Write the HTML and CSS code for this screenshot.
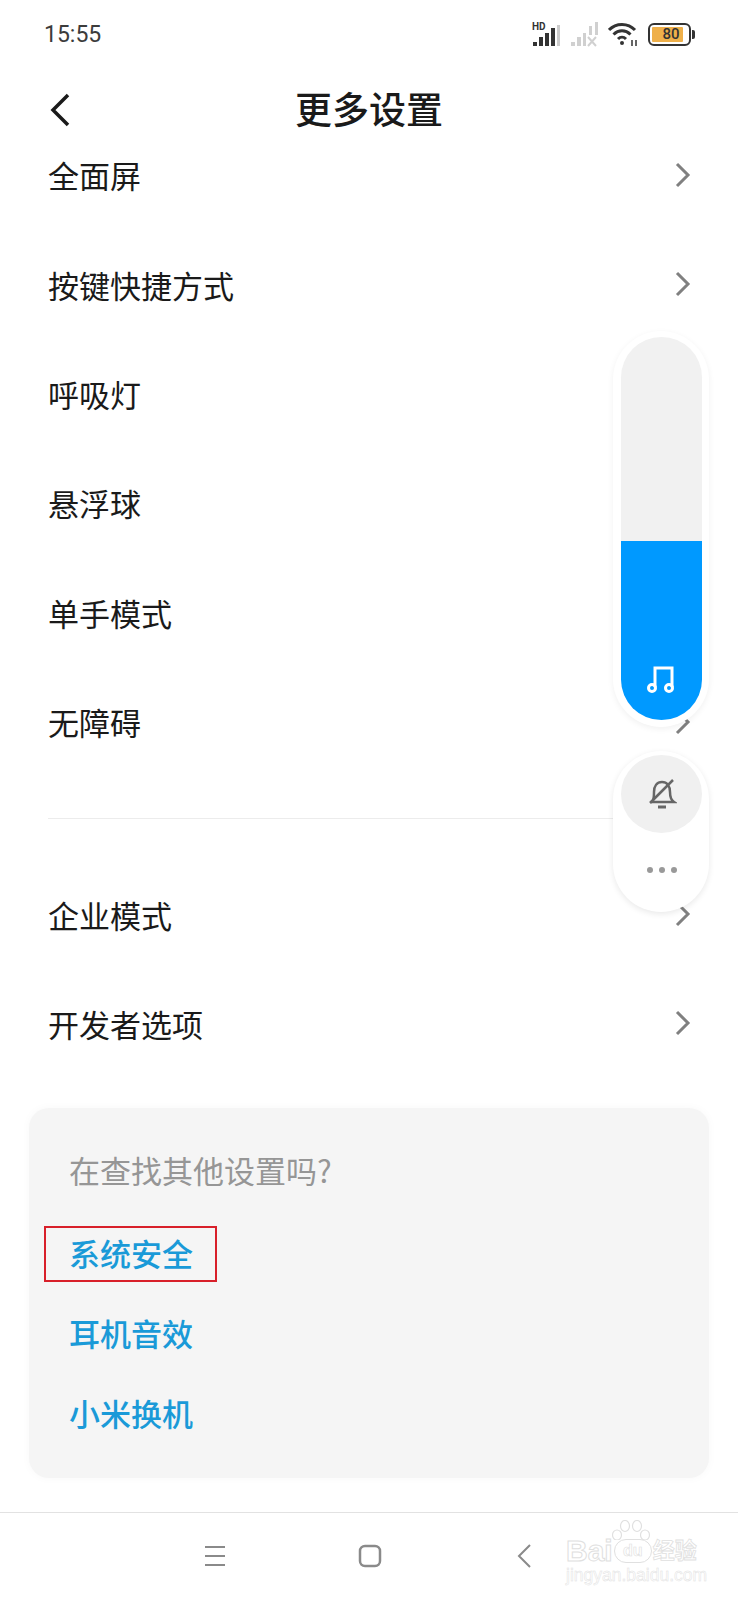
FILE: index.html
```html
<!DOCTYPE html>
<html lang="zh-CN">
  <head>
    <meta charset="UTF-8" />
    <meta name="viewport" content="width=device-width, initial-scale=1.0" />
    <title>更多设置</title>
    <link rel="stylesheet" href="styles.css">
  </head>
  <body>
    <div class="phone">
      <!-- 状态栏 -->
      <div class="status-bar">
        <span class="time">15:55</span>
        <div class="status-icons">
          <svg class="signal" width="28" height="25" viewBox="0 0 28 25">
            <text x="0" y="8" class="hd">HD</text>
            <rect x="1" y="20" width="4" height="4" fill="#333" />
            <rect x="7" y="15" width="4" height="9" fill="#333" />
            <rect x="13" y="11" width="4" height="13" fill="#333" />
            <rect x="19" y="6" width="4" height="18" fill="#333" />
            <rect x="25" y="3" width="3" height="21" fill="#ccc" />
          </svg>
          <svg class="signal" width="28" height="25" viewBox="0 0 28 25">
            <rect x="1" y="20" width="4" height="4" fill="#d0d0d0" />
            <rect x="7" y="15" width="4" height="9" fill="#d0d0d0" />
            <rect x="13" y="11" width="3" height="13" fill="#d0d0d0" />
            <rect x="19" y="4" width="3" height="9" fill="#d0d0d0" />
            <rect x="25" y="0" width="3" height="13" fill="#d0d0d0" />
            <path d="M18 15l8 9M26 15l-8 9" stroke="#d0d0d0" stroke-width="2" fill="none" />
          </svg>
          <svg class="wifi" width="30" height="25" viewBox="0 0 30 25" fill="none" stroke="#333" stroke-width="3">
            <path d="M1 8c7-7.500 19-7.500 26 0" />
            <path d="M5.500 12.500c5-5 12-5 17 0" />
            <path d="M10 17c2.500-2.500 5.500-2.500 8 0" />
            <circle cx="14" cy="21" r="2" fill="#333" stroke="none" />
            <path d="M24 18v6M28 18v6" stroke-width="1.500" />
          </svg>
          <div class="battery">
            <div class="battery-body"><span class="battery-level">80</span></div>
            <div class="battery-tip"></div>
          </div>
        </div>
      </div>

      <!-- 标题栏 -->
      <div class="header">
        <svg class="back" width="24" height="34" viewBox="0 0 24 34" fill="none" stroke="#1a1a1a" stroke-width="3.500">
          <path d="M20 2L5 17l15 15" />
        </svg>
        <h1>更多设置</h1>
      </div>

      <!-- 设置列表 -->
      <div class="list">
        <div class="row"><span>全面屏</span><svg class="chevron" viewBox="0 0 16 26"><path d="M2 2l11 11L2 24" /></svg></div>
        <div class="row"><span>按键快捷方式</span><svg class="chevron" viewBox="0 0 16 26"><path d="M2 2l11 11L2 24" /></svg></div>
        <div class="row"><span>呼吸灯</span><svg class="chevron" viewBox="0 0 16 26"><path d="M2 2l11 11L2 24" /></svg></div>
        <div class="row"><span>悬浮球</span><svg class="chevron" viewBox="0 0 16 26"><path d="M2 2l11 11L2 24" /></svg></div>
        <div class="row"><span>单手模式</span><svg class="chevron" viewBox="0 0 16 26"><path d="M2 2l11 11L2 24" /></svg></div>
        <div class="row"><span>无障碍</span><svg class="chevron" viewBox="0 0 16 26"><path d="M2 2l11 11L2 24" /></svg></div>
        <div class="divider"></div>
        <div class="row"><span>企业模式</span><svg class="chevron" viewBox="0 0 16 26"><path d="M2 2l11 11L2 24" /></svg></div>
        <div class="row"><span>开发者选项</span><svg class="chevron" viewBox="0 0 16 26"><path d="M2 2l11 11L2 24" /></svg></div>
      </div>

      <!-- 其他设置 -->
      <div class="card">
        <p class="card-title">在查找其他设置吗?</p>
        <a class="card-link">系统安全<span class="red-box"></span></a>
        <a class="card-link">耳机音效</a>
        <a class="card-link">小米换机</a>
      </div>

      <!-- 导航栏 -->
      <div class="nav-bar">
        <svg width="24" height="24" viewBox="0 0 24 24" fill="none" stroke="#8a8a8a" stroke-width="2">
          <path d="M2 3h20M2 12h20M2 21h20" />
        </svg>
        <svg width="24" height="24" viewBox="0 0 24 24" fill="none" stroke="#8a8a8a" stroke-width="2.500">
          <rect x="2" y="2" width="20" height="20" rx="5" />
        </svg>
        <svg width="24" height="26" viewBox="0 0 24 26" fill="none" stroke="#8a8a8a" stroke-width="2">
          <path d="M17 2L6 13l11 11" />
        </svg>
      </div>

      <!-- 音量浮层 -->
      <div class="volume">
        <div class="volume-track">
          <div class="volume-fill">
            <svg width="30" height="30" viewBox="0 0 30 30" fill="none" stroke="#fff" stroke-width="3">
              <path d="M8 23V4h17v19" />
              <circle cx="5" cy="24" r="3.500" />
              <circle cx="22" cy="24" r="3.500" />
            </svg>
          </div>
        </div>
      </div>
      <div class="ringer">
        <div class="ringer-circle">
          <svg width="30" height="32" viewBox="0 0 30 32" fill="none" stroke="#666" stroke-width="2.500">
            <path d="M4 24h23c-3-2-4-5-4-10 0-6-3-10-8-10s-8 4-8 10c0 3 0 6-1 8" />
            <path d="M11 29h8" stroke-width="3" />
            <path d="M3 25L26 2" />
          </svg>
        </div>
        <div class="ringer-more"><i></i><i></i><i></i></div>
      </div>

      <!-- 水印 -->
      <div class="watermark">
        <svg class="paw" width="40" height="20" viewBox="0 0 40 20" fill="none" stroke="#e0e0e0" stroke-width="1.200">
          <ellipse cx="6" cy="15" rx="4.500" ry="5" />
          <ellipse cx="14" cy="6" rx="4.500" ry="5.500" />
          <ellipse cx="26" cy="6" rx="4.500" ry="5.500" />
          <ellipse cx="34" cy="15" rx="4.500" ry="5" />
        </svg>
        <div class="wm-logo">
          <span>Bai</span>
          <span class="wm-du">du</span>
          <span class="wm-cn">经验</span>
        </div>
        <div class="wm-url">jingyan.baidu.com</div>
      </div>
    </div>
  </body>
</html>
```

FILE: styles.css
```css
* {
  box-sizing: border-box;
}

body {
  margin: 0;
  background-color: #fff;
  font-family: "Noto Sans CJK SC", "Noto Sans", sans-serif;
  color: #1a1a1a;
}

.phone {
  position: relative;
  width: 738px;
  height: 1600px;
  overflow: hidden;
  background-color: #fff;
}

/* 状态栏 */
.status-bar {
  display: flex;
  justify-content: space-between;
  align-items: center;
  height: 68px;
  padding: 0 43px 0 44px;
}

.time {
  font-family: Roboto, sans-serif;
  font-size: 23px;
  font-weight: 400;
  color: #3c3c3c;
}

.status-icons {
  display: flex;
  align-items: center;
  gap: 10px;
}

.hd {
  font-family: Roboto, sans-serif;
  font-size: 10px;
  font-weight: 700;
  fill: #333;
}

.battery {
  display: flex;
  align-items: center;
  gap: 1px;
}

.battery-body {
  width: 43px;
  height: 23px;
  padding: 2px;
  border: 2px solid #333;
  border-radius: 6px;
}

.battery-level {
  display: block;
  width: 31px;
  height: 15px;
  background-color: #efb04a;
  border-radius: 1px;
  font-family: Roboto, sans-serif;
  font-size: 15px;
  font-weight: 500;
  line-height: 15px;
  text-align: center;
  text-indent: 7px;
  color: #333;
}

.battery-tip {
  width: 3px;
  height: 9px;
  background-color: #333;
  border-radius: 0 2px 2px 0;
}

/* 标题栏 */
.header {
  position: relative;
  display: flex;
  justify-content: center;
  align-items: center;
  height: 84px;
}

.back {
  position: absolute;
  left: 48px;
  top: 25px;
}

.header h1 {
  margin: 0 0 4px;
  font-size: 37px;
  font-weight: 500;
  line-height: 80px;
}

/* 列表 */
.list {
  margin-top: -32px;
}

.row {
  display: flex;
  justify-content: space-between;
  align-items: center;
  height: 109.400px;
  padding: 0 47px 0 48px;
  font-size: 31px;
}

.chevron {
  width: 16px;
  height: 26px;
  fill: none;
  stroke: #808080;
  stroke-width: 3;
}

.divider {
  height: 1px;
  margin: 42px 40px 40px 48px;
  background-color: #ececec;
}

/* 其他设置卡片 */
.card {
  display: flex;
  flex-direction: column;
  width: 680px;
  height: 370px;
  margin: 30px 0 0 29px;
  padding: 41px 0 0 40px;
  background-color: #f5f5f5;
  border-radius: 20px;
  box-shadow: 0 0 10px rgba(0, 0, 0, 0.03);
}

.card-title {
  margin: 0 0 40px;
  font-size: 31px;
  line-height: 42px;
  color: #969696;
}

.card-link {
  position: relative;
  align-self: flex-start;
  height: 80px;
  font-size: 31px;
  font-weight: 500;
  line-height: 44px;
  color: #1a9ad8;
}

.red-box {
  position: absolute;
  left: -25px;
  top: -5px;
  width: 173px;
  height: 56px;
  border: 2px solid #d8202a;
}

/* 导航栏 */
.nav-bar {
  display: flex;
  justify-content: center;
  align-items: center;
  gap: 131px;
  height: 86px;
  margin-top: 34px;
  padding-left: 2px;
  border-top: 1px solid #e2e2e2;
}

/* 音量浮层 */
.volume {
  position: absolute;
  left: 613px;
  top: 331px;
  width: 96px;
  height: 396px;
  padding: 6px 7px 7px 8px;
  background-color: #fff;
  border-radius: 48px;
  box-shadow: 0 2px 6px rgba(0, 0, 0, 0.06);
}

.volume-track {
  position: relative;
  height: 100%;
  overflow: hidden;
  background-color: #f1f1f1;
  border-radius: 41px;
}

.volume-fill {
  position: absolute;
  left: 0;
  right: 0;
  bottom: 0;
  display: flex;
  justify-content: center;
  align-items: flex-end;
  height: 179px;
  padding-bottom: 26px;
  background-color: #0099ff;
}

.ringer {
  position: absolute;
  left: 613px;
  top: 751px;
  width: 96px;
  height: 161px;
  padding: 4px 7px 0 8px;
  background-color: #fff;
  border-radius: 48px;
  box-shadow: 0 2px 6px rgba(0, 0, 0, 0.09);
}

.ringer-circle {
  display: flex;
  justify-content: center;
  align-items: center;
  width: 81px;
  height: 78px;
  background-color: #f0f0f0;
  border-radius: 50%;
}

.ringer-more {
  display: flex;
  justify-content: center;
  gap: 6px;
  margin-top: 34px;
}

.ringer-more i {
  width: 6px;
  height: 6px;
  background-color: #999;
  border-radius: 50%;
}

/* 水印 */
.watermark {
  position: absolute;
  left: 566px;
  top: 1520px;
  width: 134px;
  height: 64px;
}

.paw {
  position: absolute;
  left: 45px;
  top: 0;
}

.wm-logo {
  position: absolute;
  left: 0;
  top: 17px;
  display: flex;
  align-items: center;
  gap: 1px;
  height: 28px;
  font-family: "Liberation Sans", "Noto Sans CJK SC", sans-serif;
  font-size: 30px;
  font-weight: 700;
  line-height: 28px;
  white-space: nowrap;
  color: #fff;
  -webkit-text-stroke: 1px #e0e0e0;
}

.wm-du {
  width: 38px;
  height: 24px;
  border: 1px solid #e0e0e0;
  border-radius: 12px;
  font-size: 16px;
  line-height: 22px;
  text-align: center;
  -webkit-text-stroke: 0.600px #e0e0e0;
}

.wm-cn {
  font-size: 22px;
  -webkit-text-stroke: 0.800px #e0e0e0;
}

.wm-url {
  position: absolute;
  left: 0;
  top: 46px;
  font-family: "Liberation Sans", sans-serif;
  font-size: 17.500px;
  line-height: 18px;
  white-space: nowrap;
  color: #fff;
  -webkit-text-stroke: 0.500px #e2e2e2;
}
```
